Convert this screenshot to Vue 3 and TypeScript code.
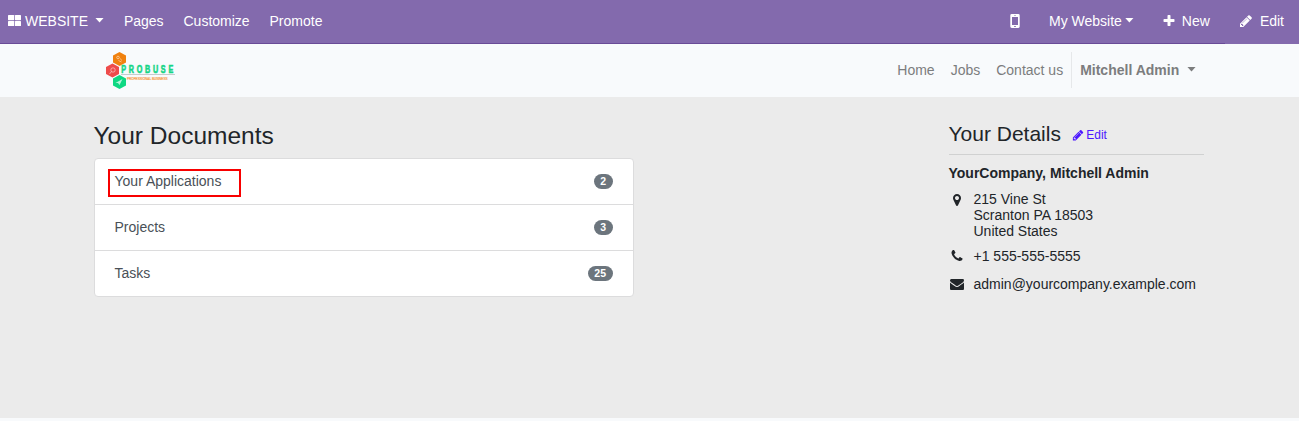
<script setup lang="ts">
interface Doc {
  name: string
  count: number
  marked?: boolean
}

const menus: string[] = ['Pages', 'Customize', 'Promote']
const links: string[] = ['Home', 'Jobs', 'Contact us']
const docs: Doc[] = [
  { name: 'Your Applications', count: 2, marked: true },
  { name: 'Projects', count: 3 },
  { name: 'Tasks', count: 25 },
]

const pencil =
  'M491 1536l91-91-235-235-91 91v107h128v128h107zm523-928q0-22-22-22-10 0-17 7l-542 542q-7 7-7 17 0 22 22 22 10 0 17-7l542-542q7-7 7-17zm-54-192l416 416-832 832h-416v-416zm683 96q0 53-37 90l-166 166-416-416 166-165q36-38 90-38 53 0 91 38l235 234q37 39 37 91z'
const plus =
  'M1600 736v192q0 40-28 68t-68 28h-416v416q0 40-28 68t-68 28h-192q-40 0-68-28t-28-68v-416h-416q-40 0-68-28t-28-68v-192q0-40 28-68t68-28h416v-416q0-40 28-68t68-28h192q40 0 68 28t28 68v416h416q40 0 68 28t28 68z'
const marker =
  'M1152 640q0-106-75-181t-181-75-181 75-75 181 75 181 181 75 181-75 75-181zm256 0q0 109-33 179l-364 774q-16 33-47.500 52t-67.500 19-67.500-19-46.500-52l-365-774q-33-70-33-179 0-212 150-362t362-150 362 150 150 362z'
const phone =
  'M1600 1240q0 27-10 70.500t-21 68.500q-21 50-122 106-94 51-186 51-27 0-53-3.500t-57.500-12.500-47-14.500-55.500-20.500-49-18q-98-35-175-83-127-79-264-216t-216-264q-48-77-83-175-3-9-18-49t-20.500-55.500-14.500-47-12.500-57.500-3.500-53q0-92 51-186 56-101 106-122 25-11 68.500-21t70.500-10q14 0 21 3 18 6 53 76 11 19 30 54t35 63.500 31 53.500q3 4 17.500 25t21.500 35.500 7 28.500q0 20-28.500 50t-62 55-62 53-28.500 46q0 9 5 22.500t8.500 20.500 14 24 11.500 19q76 137 174 235t235 174q2 1 19 11.500t24 14 20.500 8.500 22.500 5q18 0 46-28.500t53-62 55-62 50-28.500q14 0 28.500 7t35.500 21.500 25 17.500q25 15 53.500 31t63.500 35 54 30q70 35 76 53 3 7 3 21z'
const envelope =
  'M1792 710v794q0 66-47 113t-113 47h-1472q-66 0-113-47t-47-113v-794q44 49 101 87 362 246 497 345 57 42 92.500 65.500t94.500 48 110 24.500h2q51 0 110-24.500t94.500-48 92.500-65.500q170-123 498-345 57-39 100-87zm0-294q0 79-49 151t-122 123q-376 261-468 325-10 7-42.500 31t-54 38.500-52 32.500-57.500 27-50 9h-2q-23 0-50-9t-57.500-27-52-32.500-54-38.500-42.500-31q-91-64-262-182.500t-205-142.500q-62-42-117-115.500t-55-136.500q0-78 41.500-130t118.500-52h1472q65 0 112.500 47t47.500 113z'
</script>

<template>
  <div class="page">
    <nav class="topbar">
      <div class="top-left">
        <a class="brand">
          <svg class="grid-icon" viewBox="0 0 13 11">
            <rect x="0" y="0" width="6.200" height="5.200" rx="0.6" />
            <rect x="6.900" y="0" width="6.100" height="5.200" rx="0.6" />
            <rect x="0" y="5.900" width="6.200" height="5.100" rx="0.6" />
            <rect x="6.900" y="5.900" width="6.100" height="5.100" rx="0.6" />
          </svg>
          <span>WEBSITE</span>
          <i class="caret"></i>
        </a>
        <a v-for="m in menus" :key="m" class="menu">{{ m }}</a>
      </div>
      <div class="top-right">
        <a class="mobile">
          <svg viewBox="0 0 10 14">
            <path
              fill-rule="evenodd"
              d="M1.700 0h6.600q1.400 0 1.400 1.400v11.200q0 1.400-1.400 1.400h-6.600q-1.400 0-1.400-1.400v-11.200q0-1.400 1.400-1.400zM2 3v8h6v-8zM4 1.200v.6h2v-.6zM4.200 12v1h1.600v-1z"
            />
          </svg>
        </a>
        <a class="site">My Website<i class="caret"></i></a>
        <a class="new"><svg class="fa" viewBox="0 0 1792 1792"><path :d="plus" /></svg><span>New</span></a>
        <a class="edit"><svg class="fa" viewBox="0 0 1792 1792"><path :d="pencil" /></svg><span>Edit</span></a>
      </div>
    </nav>

    <header class="header">
      <svg class="logo" viewBox="0 0 72 40">
        <path d="M14.500 1l6.500 3.500v7l-6.500 3.500l-6.500-3.500v-7z" fill="#f0810f" />
        <path d="M7.500 12.500l6.500 3.500v7l-6.500 3.500l-6.500-3.500v-7z" fill="#ee4b4b" />
        <path d="M14.500 24l6.500 3.500v7l-6.500 3.500l-6.500-3.500v-7z" fill="#0fd883" />
        <g fill="none" stroke="#fff" stroke-opacity="0.6" stroke-width="0.8">
          <circle cx="13" cy="6.500" r="1.300" />
          <path d="M13.500 9.500l3 1.500M15.500 7.500l1 2" />
          <circle cx="8" cy="19" r="2.200" />
          <path d="M4.500 23l2-2.500" />
        </g>
        <path d="M10.500 32l7-4-3 6-1.500-2z" fill="#fff" fill-opacity="0.7" />
        <path d="M16 23.500h54" stroke="#b9bfc0" stroke-width="0.8" />
        <text class="logo-name" transform="translate(16.200 22) scale(0.72 1)">PROBUSE</text>
        <text class="logo-sub" transform="translate(22 29) scale(0.74 1)">PROFESSIONAL BUSINESS</text>
      </svg>
      <div class="links">
        <a v-for="l in links" :key="l">{{ l }}</a>
        <a class="user">Mitchell Admin<i class="caret"></i></a>
      </div>
    </header>

    <main class="main">
      <section class="documents">
        <h3>Your Documents</h3>
        <div class="list">
          <a v-for="d in docs" :key="d.name" class="row">
            <span :class="{ marked: d.marked }">{{ d.name }}</span>
            <b class="badge">{{ d.count }}</b>
          </a>
        </div>
      </section>

      <aside class="details">
        <div class="details-head">
          <h4>Your Details</h4>
          <a><svg viewBox="0 0 1792 1792"><path :d="pencil" /></svg>Edit</a>
        </div>
        <div class="company">YourCompany, Mitchell Admin</div>
        <div class="line address">
          <svg class="fa" viewBox="0 0 1792 1792"><path :d="marker" /></svg>
          <span>215 Vine St<br />Scranton PA 18503<br />United States</span>
        </div>
        <div class="line tel">
          <svg class="fa" viewBox="0 0 1792 1792"><path :d="phone" /></svg>
          <span>+1 555-555-5555</span>
        </div>
        <div class="line mail">
          <svg class="fa" viewBox="0 0 1792 1792"><path :d="envelope" /></svg>
          <span>admin@yourcompany.example.com</span>
        </div>
      </aside>
    </main>
  </div>
</template>

<style>
body {
  margin: 0;
  background: #f8fafc;
}
</style>

<style scoped>
.page {
  width: 1299px;
  height: 421px;
  overflow: hidden;
  font: 14px/21px "Liberation Sans", Arial, sans-serif;
  color: #212529;
  background: #f8fafc;
}
svg {
  fill: currentColor;
  flex: none;
}
.fa {
  width: 14px;
  height: 14px;
}
.caret {
  width: 9px;
  height: 5px;
  background: currentColor;
  clip-path: polygon(0 0, 100% 0, 50% 100%);
}
.topbar {
  display: flex;
  justify-content: space-between;
  height: 44px;
  color: #fff;
  background: linear-gradient(#694b97, #694b97) 0 100% / 1225px 1px no-repeat #836aad;
}
.top-left,
.top-right,
.topbar a {
  display: flex;
  align-items: center;
}
.topbar a {
  height: 42px;
  white-space: nowrap;
}
.top-left,
.top-right {
  align-items: flex-start;
}
.brand {
  margin-left: 8px;
}
.grid-icon {
  width: 13px;
  height: 11px;
  margin: -1px 4px 0 0;
}
.brand .caret {
  margin: -2px 0 0 7px;
}
.menu {
  margin-left: 19.900px;
}
.mobile svg {
  width: 10px;
  height: 14px;
}
.mobile {
  margin-right: 29px;
}
.site .caret {
  margin: -2px 0 0 3px;
}
.new {
  margin-left: 28px;
}
.new span {
  margin-left: 6px;
}
.edit span {
  margin-left: 7px;
}
.edit {
  margin: 0 15px 0 29px;
}
.header {
  display: flex;
  justify-content: space-between;
  height: 53px;
  padding: 0 103px 0 105px;
  box-sizing: border-box;
}
.logo {
  width: 72px;
  height: 40px;
  margin-top: 7px;
  overflow: visible;
}
.logo-name {
  font: bold 10px "Liberation Sans", Arial, sans-serif;
  letter-spacing: 3.800px;
  fill: #16d586;
  stroke: #16d586;
  stroke-width: 0.600px;
}
.logo-sub {
  font: 4.200px "Liberation Sans", Arial, sans-serif;
  fill: #f6983c;
  stroke: #f6983c;
  stroke-width: 0.200px;
}
.links {
  display: flex;
  align-items: center;
  height: 36px;
  margin-top: 8px;
  color: #7c7d7e;
}
.links a {
  margin-right: 16px;
}
.links a:nth-child(3) {
  margin-right: 8px;
}
.links .user {
  display: flex;
  align-items: center;
  height: 36px;
  margin: 0;
  padding-left: 8px;
  border-left: 1px solid #e6e8ea;
  font-weight: bold;
}
.user .caret {
  margin: -2px 0 0 7.800px;
}
.main {
  display: flex;
  justify-content: space-between;
  height: 321px;
  padding: 0 95px 0 93.500px;
  box-sizing: border-box;
  background: #ebebeb;
}
h3,
h4 {
  margin: 0;
  font-weight: 500;
}
.documents {
  width: 540px;
}
h3 {
  padding-top: 24px;
  font-size: 24.500px;
  line-height: 29px;
}
.list {
  margin-top: 8px;
  border: 1px solid #dcdcdd;
  border-radius: 4px;
  background: #fff;
}
.row {
  display: flex;
  align-items: center;
  justify-content: space-between;
  height: 45px;
  padding: 0 20px;
  color: #495057;
}
.row + .row {
  border-top: 1px solid #dcdcdd;
}
.marked {
  position: relative;
}
.marked::after {
  content: "";
  position: absolute;
  left: -6.500px;
  top: -2px;
  width: 129px;
  height: 24px;
  border: 2px solid #f80000;
}
.badge {
  padding: 0 6.500px;
  border-radius: 8px;
  background: #6c757d;
  color: #fff;
  font-size: 10.500px;
  line-height: 15px;
}
.details {
  width: 255.500px;
}
.details-head {
  display: flex;
  height: 58px;
  box-sizing: border-box;
  padding-top: 24px;
  border-bottom: 1px solid #d0d1d1;
}
h4 {
  font-size: 21px;
  line-height: 25px;
}
.details-head a {
  display: flex;
  align-items: center;
  height: 25px;
  margin: 2px 0 0 11px;
  color: #4c18ff;
  font-size: 12px;
}
.details-head a svg {
  width: 12.250px;
  height: 12.250px;
  margin: -1px 2px 0 0;
}
.company {
  margin-top: 8px;
  font-weight: bold;
}
.line {
  display: flex;
  line-height: 16px;
}
.line svg {
  margin: 2px 9.500px 0 1.500px;
}
.address {
  margin-top: 7px;
}
.tel {
  margin-top: 9px;
}
.mail {
  margin-top: 12px;
}
.tel svg,
.mail svg {
  margin-top: 0.500px;
}
</style>
